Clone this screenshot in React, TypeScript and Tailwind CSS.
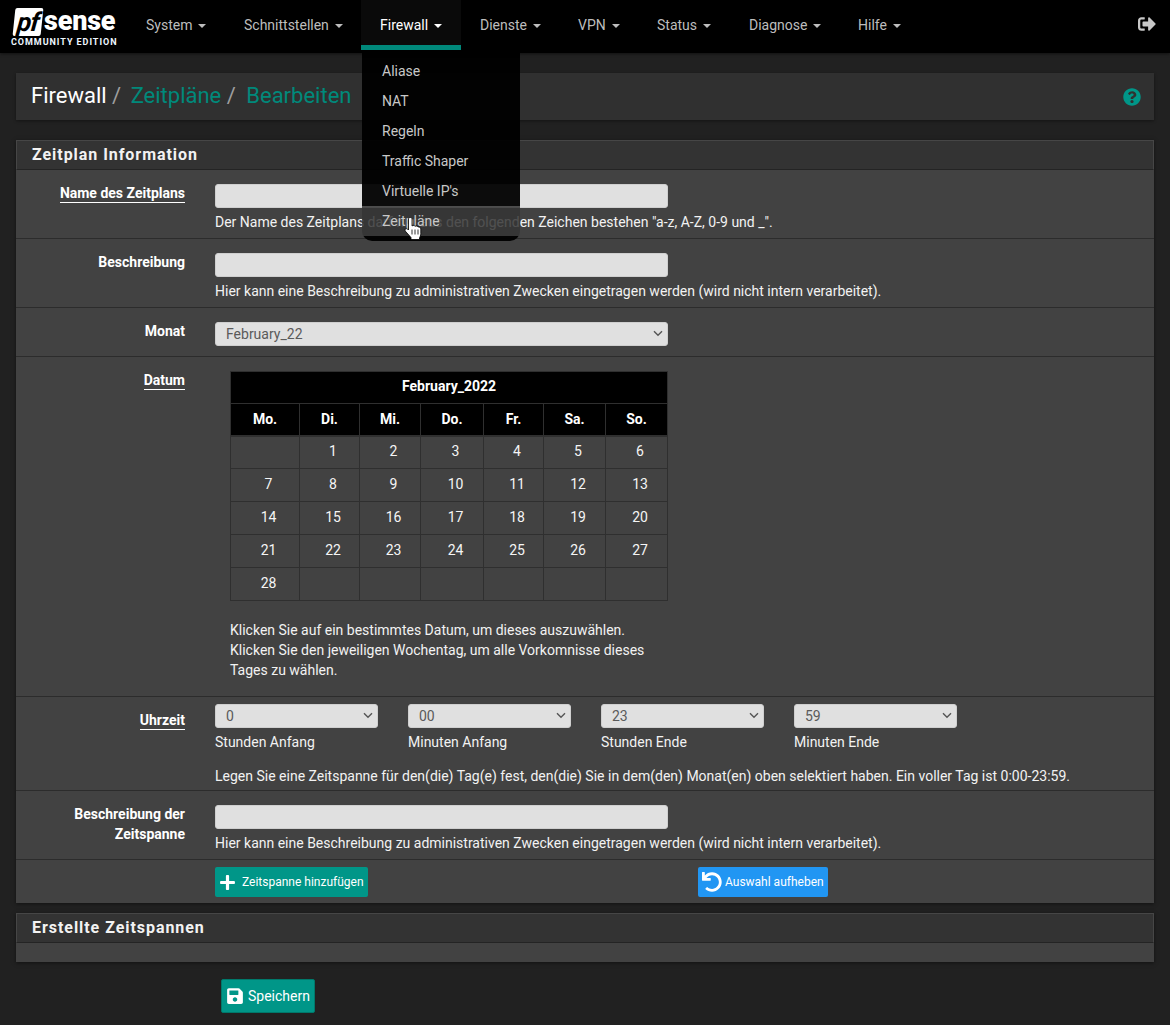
import React from "react";
import { FaSave, FaPlus, FaUndo, FaQuestionCircle, FaSignOutAlt } from "react-icons/fa";

const navItems = [
  { t: "System", w: "w-[98px] pl-[20px]" },
  { t: "Schnittstellen", w: "w-[137px] pl-[20px]" },
  { t: "Firewall", w: "w-[100px] pl-[19px]", active: true },
  { t: "Dienste", w: "w-[97px] pl-[19px]" },
  { t: "VPN", w: "w-[79px] pl-[20px]" },
  { t: "Status", w: "w-[92px] pl-[20px]" },
  { t: "Diagnose", w: "w-[109px] pl-[20px]" },
  { t: "Hilfe", w: "w-[90px] pl-[20px]" },
];

const menu = ["Aliase", "NAT", "Regeln", "Traffic Shaper", "Virtuelle IP's"];

function Caret() {
  return <span className="ml-[6px] inline-block h-0 w-0 border-x-[4px] border-t-[4px] border-x-transparent border-t-current align-middle" />;
}

function Row({ label, underline, children, className, labelClass }: { label?: React.ReactNode; underline?: boolean; children: React.ReactNode; className?: string; labelClass?: string }) {
  return (
    <div className={"flex border-b border-[#2c2c2c] bg-[#424242] " + (className ?? "")}>
      <div className={"w-[169px] shrink-0 text-right text-[14px] font-bold leading-[20px] text-white " + (labelClass ?? "-mt-[1px]")}>
        {label && (underline ? <span className="border-b border-white pb-[1px]">{label}</span> : label)}
      </div>
      <div className="ml-[30px] min-w-0 flex-1">{children}</div>
    </div>
  );
}

function TextField() {
  return <div className="h-[24px] w-[453px] rounded-[3px] border border-[#cfcfcf] bg-[#e0e0e0]" />;
}

function Sel({ value, className }: { value: string; className: string }) {
  return (
    <div className={"relative h-[24px] " + className}>
      <select defaultValue={value} className="h-[24px] w-full appearance-none rounded-[3px] border border-[#cfcfcf] bg-[#e0e0e0] pl-[10px] text-[14px] text-[#5a5a5a]">
        <option value={value}>{value}</option>
      </select>
      <svg className="pointer-events-none absolute right-[5px] top-[8px]" width="10" height="7" viewBox="0 0 10 7">
        <path d="M1 1.200 5 5.200 9 1.200" fill="none" stroke="#555555" strokeWidth="1.400" />
      </svg>
    </div>
  );
}

function Heading({ children }: { children: React.ReactNode }) {
  return (
    <div className="flex h-[30px] items-center border border-[#464646] border-b-[#242424] bg-[#333333] pl-[15px] text-[16px] font-bold tracking-[0.95px] text-[#f2f2f2]">
      {children}
    </div>
  );
}

const weeks: string[][] = [
  ["", "1", "2", "3", "4", "5", "6"],
  ["7", "8", "9", "10", "11", "12", "13"],
  ["14", "15", "16", "17", "18", "19", "20"],
  ["21", "22", "23", "24", "25", "26", "27"],
  ["28", "", "", "", "", "", ""],
];
const days = ["Mo.", "Di.", "Mi.", "Do.", "Fr.", "Sa.", "So."];
const colClasses = ["w-[69px]", "w-[60px]", "w-[61px]", "w-[63px]", "w-[60px]", "w-[62px]", "w-[62px]"];

function TimeCol({ value, label }: { value: string; label: string }) {
  return (
    <div className="w-[163px]">
      <Sel value={value} className="w-[163px]" />
      <div className="mt-[4px] text-[14px] leading-[20px] text-[#f2f2f2]">{label}</div>
    </div>
  );
}

export default function App() {
  return (
    <div className="relative min-h-[1025px] w-full overflow-hidden bg-[#212121] font-['Roboto',sans-serif] text-[14px] text-white">
      <nav className="relative z-20 flex h-[53px] items-start bg-black shadow-[0_1px_3px_rgba(0,0,0,0.5)]">
        <div className="relative h-[53px] w-[126px] shrink-0">
          <div className="absolute left-[14px] top-[8px] flex h-[28px] w-[28px] -skew-x-6 items-center justify-center rounded-[2px] bg-white text-[26px] font-bold italic leading-none tracking-[-1px] text-black">
            pf
          </div>
          <div className="absolute left-[44px] top-[6px] text-[27px] font-black leading-[30px] tracking-[-0.2px] text-white">sense</div>
          <div className="absolute left-[11px] top-[37px] text-[9px] font-bold leading-[11px] tracking-[0.95px] text-[#eef7ff]">COMMUNITY EDITION</div>
        </div>
        {navItems.map((n) => (
          <div key={n.t} className={n.w + " flex h-[50px] shrink-0 items-center " + (n.active ? "border-b-[5px] border-[#00897b] bg-[#0a0a0a] pt-[5px] text-white" : "text-[#bdbdbd]")}>
            <span>{n.t}<Caret /></span>
          </div>
        ))}
        <div className="ml-auto mr-[14px] mt-[15px] text-[#c8c8c8]">
          <FaSignOutAlt size={18} />
        </div>
      </nav>

      {/* dropdown over the page */}
      <div className="absolute left-[362px] top-[53px] z-10 w-[158px] overflow-hidden rounded-b-[10px] text-[14px] text-[#c8c8c8]">
        <div className="bg-black/95 pt-[3px]">
          {menu.map((m) => (
            <div key={m} className="flex h-[30px] items-center pl-[20px]">{m}</div>
          ))}
        </div>
        <div className="flex h-[30px] items-center bg-[#343434]/85 pl-[20px]">Zeitpläne</div>
        <div className="h-[5px] bg-black/95" />
      </div>
      <svg className="absolute left-[404px] top-[217px] z-30" width="18" height="24" viewBox="0 0 18 24">
        <path d="M4.500 2c0-2 3.500-2 3.500 0v7c1-.8 2.500-.6 3 .3 1-.6 2.500-.3 3 .7 1.200-.4 2.800.3 2.800 2v4.500c0 2-.8 3.300-1.300 4.500v1.500H7v-2L1.200 14c-1-1.500.8-3 2.300-2l1 1z" fill="#fff" stroke="#000" strokeWidth="0.800" />
        <path d="M8 12.500v5M11 12.500v5M14 12.500v5" stroke="#000" strokeWidth="0.800" />
      </svg>

      <main className="px-[16px] pt-[20px]">
        <div className="flex h-[47px] items-center justify-between bg-[#303030] pl-[15px] pr-[13px] shadow-[0_1px_3px_rgba(0,0,0,0.4)]">
          <div className="-mt-[2px] text-[22px] leading-[30px]">
            <span className="text-white">Firewall</span>
            <span className="text-[#9e9e9e]"> / </span>
            <span className="ml-[4px] text-[#00897b]">Zeitpläne</span>
            <span className="text-[#9e9e9e]"> / </span>
            <span className="ml-[5px] text-[#00897b]">Bearbeiten</span>
          </div>
          <FaQuestionCircle size={18} className="text-[#009688]" />
        </div>

        <section className="mt-[20px] shadow-[0_1px_4px_rgba(0,0,0,0.5)]">
          <Heading>Zeitplan Information</Heading>
          <Row label="Name des Zeitplans" underline className="h-[69px] pt-[14px]">
            <TextField />
            <p className="mt-[4px] leading-[20px] text-[#f2f2f2]">Der Name des Zeitplans darf nur aus den folgenden Zeichen bestehen "a-z, A-Z, 0-9 und _".</p>
          </Row>
          <Row label="Beschreibung" className="h-[69px] pt-[14px]">
            <TextField />
            <p className="mt-[4px] leading-[20px] text-[#f2f2f2]">Hier kann eine Beschreibung zu administrativen Zwecken eingetragen werden (wird nicht intern verarbeitet).</p>
          </Row>
          <Row label="Monat" className="h-[49px] pt-[14px]">
            <Sel value="February_22" className="w-[453px]" />
          </Row>
          <Row label="Datum" underline className="h-[340px] pt-[14px]">
            <table className="ml-[15px] table-fixed border-collapse text-center text-[14px] text-[#f5f5f5]">
              <thead>
                <tr>
                  <th colSpan={7} className="h-[32px] border border-[#2f2f2f] bg-black pb-[2px] font-bold text-white">February_2022</th>
                </tr>
                <tr>
                  {days.map((d, i) => (
                    <th key={d} className={colClasses[i] + " h-[32px] border border-[#2f2f2f] border-b-2 bg-black font-bold text-white"}>{d}</th>
                  ))}
                </tr>
              </thead>
              <tbody>
                {weeks.map((w, r) => (
                  <tr key={r}>
                    {w.map((c, i) => (
                      <td key={i} className="h-[33px] border border-[#2f2f2f] pb-[2px] pl-[7px]">{c}</td>
                    ))}
                  </tr>
                ))}
              </tbody>
            </table>
            <p className="ml-[15px] mt-[19px] w-[440px] leading-[20px] text-[#f2f2f2]">
              Klicken Sie auf ein bestimmtes Datum, um dieses auszuwählen.<br />
              Klicken Sie den jeweiligen Wochentag, um alle Vorkomnisse dieses Tages zu wählen.
            </p>
          </Row>
          <Row label="Uhrzeit" underline className="h-[94px] pt-[7px]" labelClass="mt-[6px]">
            <div className="flex gap-[30px]">
              <TimeCol value="0" label="Stunden Anfang" />
              <TimeCol value="00" label="Minuten Anfang" />
              <TimeCol value="23" label="Stunden Ende" />
              <TimeCol value="59" label="Minuten Ende" />
            </div>
            <p className="mt-[14px] leading-[20px] text-[#f2f2f2]">Legen Sie eine Zeitspanne für den(die) Tag(e) fest, den(die) Sie in dem(den) Monat(en) oben selektiert haben. Ein voller Tag ist 0:00-23:59.</p>
          </Row>
          <Row label="Beschreibung der Zeitspanne" className="h-[69px] pt-[14px]">
            <TextField />
            <p className="mt-[4px] leading-[20px] text-[#f2f2f2]">Hier kann eine Beschreibung zu administrativen Zwecken eingetragen werden (wird nicht intern verarbeitet).</p>
          </Row>
          <div className="flex h-[43px] bg-[#424242] pl-[199px] pt-[7px]">
            <button className="flex h-[30px] w-[153px] items-center gap-[6px] rounded-[2px] bg-[#009688] pl-[4px] text-[12px] text-white">
              <FaPlus size={17} />Zeitspanne hinzufügen
            </button>
            <button className="ml-[330px] flex h-[30px] w-[130px] items-center gap-[3px] rounded-[2px] bg-[#2196f3] pl-[4px] text-[12px] text-white">
              <FaUndo size={20} />Auswahl aufheben
            </button>
          </div>
        </section>

        <section className="mt-[10px] shadow-[0_1px_4px_rgba(0,0,0,0.5)]">
          <Heading>Erstellte Zeitspannen</Heading>
          <div className="h-[19px] bg-[#424242]" />
        </section>

        <button className="ml-[205px] mt-[17px] flex h-[34px] w-[94px] items-center gap-[4px] rounded-[2px] border border-[#00796b] bg-[#009688] pl-[4px] text-[14px] text-white">
          <FaSave size={18} />Speichern
        </button>
      </main>
    </div>
  );
}
